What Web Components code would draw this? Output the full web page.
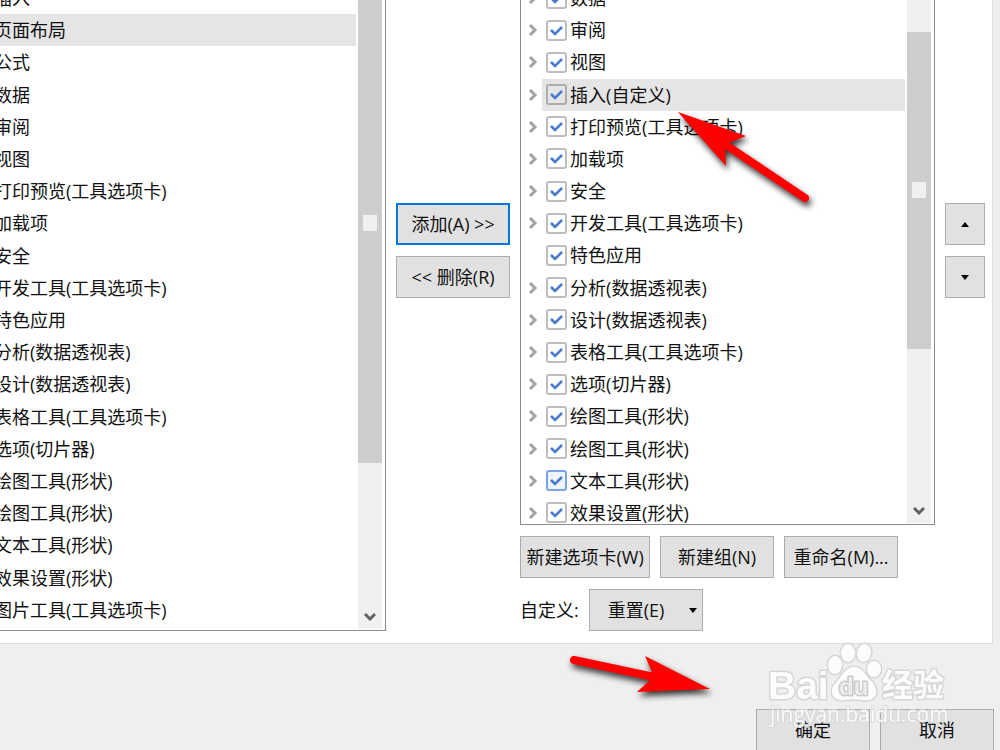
<!DOCTYPE html>
<html lang="zh-CN">
<head>
<meta charset="utf-8">
<title>选项</title>
<style>
  * {
    box-sizing: border-box;
  }
  html {
    height: 100%;
    overflow: hidden;
  }
  body {
    margin: 0;
    height: 100%;
    overflow: hidden;
    position: relative;
    background: #efefef;
    color: #111;
    font-family: "Open Sans", "Noto Sans CJK SC", sans-serif;
    font-size: 18px;
    line-height: 24px;
  }
</style>
</head>
<body>
<ribbon-options></ribbon-options>
<red-arrow kind="up"></red-arrow>
<red-arrow kind="right"></red-arrow>
<site-mark></site-mark>

<script>
class PushButton extends HTMLElement {
  constructor() {
    super();
    this._shadowRoot = this.attachShadow({ mode: "open" });
  }

  connectedCallback() {
    this._shadowRoot.innerHTML = `
    <style>
    :host {
      display: block;
      width: 114px;
      height: 42px;
      flex: none;
    }
    :host([wide]) {
      width: 130px;
    }
    :host([square]) {
      width: 40px;
    }
    button {
      box-sizing: border-box;
      display: flex;
      align-items: center;
      justify-content: center;
      width: 100%;
      height: 100%;
      padding: 0;
      border: 1px solid #adadad;
      border-radius: 0;
      background: #e1e1e1;
      color: inherit;
      font: inherit;
      white-space: nowrap;
    }
    :host([primary]) button {
      border: 2px solid #0078d7;
    }
    :host([menu]) button {
      justify-content: space-between;
      padding: 0 5px 0 18px;
    }
    </style>
    <button type="button" aria-label="${this.getAttribute("label") || this.textContent.trim()}"><slot></slot></button>`;
  }
}

class ScrollBar extends HTMLElement {
  constructor() {
    super();
    this._shadowRoot = this.attachShadow({ mode: "open" });
  }

  connectedCallback() {
    this.before = this.getAttribute("before") || 0;
    this.thumb = this.getAttribute("thumb") || 1;
    this.after = this.getAttribute("after") || 1;
    this._shadowRoot.innerHTML = `
    <style>
    :host {
      display: flex;
      flex-direction: column;
      width: 24px;
      flex: none;
      background: #f0f0f0;
    }
    .before {
      flex: ${this.before} 0 0;
    }
    .thumb {
      flex: ${this.thumb} 0 0;
      display: grid;
      place-items: center;
      background: #cdcdcd;
    }
    .thumb span {
      width: 14px;
      height: 16px;
      background: #f0f0f0;
    }
    .after {
      flex: ${this.after} 0 0;
    }
    .down {
      height: 24px;
      display: grid;
      place-items: center;
    }
    </style>
    <div class="before"></div>
    <div class="thumb"><span></span></div>
    <div class="after"></div>
    <div class="down">
      <svg width="12" height="10" viewBox="0 0 12 10"><path d="M1 2l5 5 5-5" fill="none" stroke="#606060" stroke-width="3"/></svg>
    </div>`;
  }
}

class ListFrame extends HTMLElement {
  constructor() {
    super();
    this._shadowRoot = this.attachShadow({ mode: "open" });
  }

  connectedCallback() {
    this._shadowRoot.innerHTML = `
    <style>
    :host {
      box-sizing: border-box;
      display: flex;
      min-width: 0;
      min-height: 0;
      padding: 0 3px 1px 0;
      overflow: hidden;
      border: 1px solid #888b93;
      background: #fff;
    }
    .rows {
      flex: 1;
      min-width: 0;
      display: grid;
      grid-auto-rows: 1fr;
      margin: 0 2px var(--rows-end, 3px) 0;
    }
    </style>
    <div class="rows" role="list"><slot></slot></div>
    <slot name="bar"></slot>`;
  }
}

class PlainRow extends HTMLElement {
  constructor() {
    super();
    this._shadowRoot = this.attachShadow({ mode: "open" });
  }

  connectedCallback() {
    this.setAttribute("role", "listitem");
    this._shadowRoot.innerHTML = `
    <style>
    :host {
      display: flex;
      align-items: center;
      min-height: 0;
      white-space: nowrap;
    }
    :host([selected]) {
      background: #e5e5e5;
    }
    </style>
    <slot></slot>`;
  }
}

class CheckRow extends HTMLElement {
  constructor() {
    super();
    this._shadowRoot = this.attachShadow({ mode: "open" });
  }

  connectedCallback() {
    this.setAttribute("role", "listitem");
    this._shadowRoot.innerHTML = `
    <style>
    :host {
      display: flex;
      min-height: 0;
      white-space: nowrap;
    }
    .expand {
      width: 21px;
      flex: none;
      display: grid;
      place-items: center;
      padding: 0 0 0 2px;
      border: 0;
      background: none;
    }
    :host([leaf]) .expand {
      visibility: hidden;
    }
    label {
      flex: 1;
      display: flex;
      align-items: center;
      gap: 3px;
      padding-left: 4px;
    }
    :host([selected]) label {
      background: #e5e5e5;
    }
    .box {
      display: grid;
      place-items: center;
    }
    .box > * {
      grid-area: 1 / 1;
    }
    input {
      appearance: none;
      box-sizing: border-box;
      width: 21px;
      height: 21px;
      margin: 0;
      border: 2px solid #bdbdbd;
      border-radius: 3px;
      background: #fff;
    }
    :host([selected]) input {
      border-color: #adadad;
      background: #e5e5e5;
    }
    :host([hot]) input {
      border-color: #7ba3e8;
      background: #eef4fd;
    }
    svg {
      pointer-events: none;
    }
    </style>
    <button class="expand" type="button" aria-label="展开">
      <svg width="10" height="14" viewBox="0 0 10 14"><path d="M2 2l5 5-5 5" fill="none" stroke="#a3a3a3" stroke-width="3"/></svg>
    </button>
    <label>
      <span class="box">
        <input type="checkbox" checked>
        <svg width="13" height="11" viewBox="0 0 13 11"><path d="M1 5l4 4 7-7" fill="none" stroke="#4a7bcb" stroke-width="2.6"/></svg>
      </span>
      <slot></slot>
    </label>`;
  }
}

class RibbonOptions extends HTMLElement {
  constructor() {
    super();
    this._shadowRoot = this.attachShadow({ mode: "open" });
    this.commands = ["插入", "页面布局", "公式", "数据", "审阅", "视图",
      "打印预览(工具选项卡)", "加载项", "安全", "开发工具(工具选项卡)", "特色应用",
      "分析(数据透视表)", "设计(数据透视表)", "表格工具(工具选项卡)", "选项(切片器)",
      "绘图工具(形状)", "绘图工具(形状)", "文本工具(形状)", "效果设置(形状)",
      "图片工具(工具选项卡)"];
    this.tabs = ["数据", "审阅", "视图", "插入(自定义)",
      "打印预览(工具选项卡)", "加载项", "安全", "开发工具(工具选项卡)", "特色应用",
      "分析(数据透视表)", "设计(数据透视表)", "表格工具(工具选项卡)", "选项(切片器)",
      "绘图工具(形状)", "绘图工具(形状)", "文本工具(形状)", "效果设置(形状)"];
  }

  connectedCallback() {
    this.render();
  }

  tabState(name) {
    if (name === "插入(自定义)") return "selected";
    if (name === "特色应用") return "leaf";
    if (name === "文本工具(形状)") return "hot";
    return "";
  }

  render() {
    this._shadowRoot.innerHTML = `
    <style>
    /* scrolled a little: the top and left edges lie outside the window */
    :host {
      display: flex;
      flex-direction: column;
      height: calc(100vh + 21px);
      margin-top: -20px;
    }
    main {
      flex: 1;
      min-height: 0;
      display: grid;
      grid-template-columns: minmax(0, 18fr) 114px minmax(0, 19fr) 40px;
      gap: 10px;
      margin: 0 7px 0 -8px;
      padding: 0 7px 12px 0;
      border: 1px solid #dcdcdc;
      background: #fff;
    }
    .side {
      display: flex;
      flex-direction: column;
      gap: 11px;
      padding-top: 222px;
    }
    .tabs {
      display: flex;
      flex-direction: column;
      gap: 11px;
      min-height: 0;
    }
    .tabs list-frame {
      --rows-end: -6px;
      flex: 1;
    }
    .line {
      display: flex;
      align-items: center;
      gap: 10px;
    }
    footer {
      display: flex;
      justify-content: flex-end;
      gap: 10px;
      padding: 65px 6px 0 0;
    }
    </style>
    <main>
      <list-frame>
        ${this.commands.map((name) => `<plain-row ${name === "页面布局" ? "selected" : ""}>${name}</plain-row>`).join("")}
        <scroll-bar slot="bar" thumb="482" after="142"></scroll-bar>
      </list-frame>
      <div class="side">
        <push-button primary>添加(A) &gt;&gt;</push-button>
        <push-button>&lt;&lt; 删除(R)</push-button>
      </div>
      <div class="tabs">
        <list-frame>
          ${this.tabs.map((name) => `<check-row ${this.tabState(name)}>${name}</check-row>`).join("")}
          <scroll-bar slot="bar" before="50" thumb="318" after="151"></scroll-bar>
        </list-frame>
        <div class="line">
          <push-button wide>新建选项卡(W)</push-button>
          <push-button>新建组(N)</push-button>
          <push-button>重命名(M)...</push-button>
        </div>
        <div class="line">
          <span>自定义:</span>
          <push-button menu>重置(E)
            <svg width="8" height="5" viewBox="0 0 8 5"><path d="M0 0h8L4 5z"/></svg>
          </push-button>
        </div>
      </div>
      <div class="side">
        <push-button square label="上移"><svg width="8" height="5" viewBox="0 0 8 5"><path d="M0 5h8L4 0z"/></svg></push-button>
        <push-button square label="下移"><svg width="8" height="5" viewBox="0 0 8 5"><path d="M0 0h8L4 5z"/></svg></push-button>
      </div>
    </main>
    <footer>
      <push-button>确定</push-button>
      <push-button>取消</push-button>
    </footer>`;
  }
}

class RedArrow extends HTMLElement {
  constructor() {
    super();
    this._shadowRoot = this.attachShadow({ mode: "open" });
  }

  connectedCallback() {
    const up = this.getAttribute("kind") === "up";
    this._shadowRoot.innerHTML = `
    <style>
    :host {
      position: absolute;
      left: ${up ? 670 : 560}px;
      top: ${up ? 104 : 640}px;
      pointer-events: none;
    }
    svg {
      display: block;
      overflow: visible;
      fill: #f00;
      filter: drop-shadow(2px 4px 3px rgba(0, 0, 0, 0.8));
    }
    path + path {
      stroke: #f00;
      stroke-width: 8;
      stroke-linecap: round;
    }
    </style>
    ${up
      ? `<svg width="150" height="110"><path d="M8 8L76 32L59 39L55 45L56 62Z"/><path d="M56 41L135 94"/></svg>`
      : `<svg width="160" height="70"><path d="M150 49L85 16L92 32L89 41L77 52Z"/><path d="M14 20L94 37"/></svg>`}`;
  }
}

class SiteMark extends HTMLElement {
  constructor() {
    super();
    this._shadowRoot = this.attachShadow({ mode: "open" });
  }

  connectedCallback() {
    this._shadowRoot.innerHTML = `
    <style>
    :host {
      position: absolute;
      right: 48px;
      bottom: 16px;
      pointer-events: none;
    }
    svg {
      display: block;
      opacity: 0.85;
      fill: #fff;
      stroke: #d2d2d2;
      stroke-width: 3;
      paint-order: stroke;
      stroke-linejoin: round;
    }
    .name {
      font: bold 39px "Liberation Sans", sans-serif;
    }
    .inner {
      font: bold 24px "Liberation Sans", sans-serif;
      fill: #ececec;
      stroke: #c4c4c4;
    }
    .han {
      font: bold 31px "Noto Sans CJK SC", sans-serif;
    }
    .url {
      font: 21px "Open Sans", sans-serif;
      stroke: #d6d6d6;
      stroke-width: 2;
    }
    </style>
    <svg width="184" height="92" viewBox="0 0 184 92">
      <text class="name" x="0" y="57">Bai</text>
      <ellipse cx="67" cy="23" rx="7" ry="9"/>
      <ellipse cx="80" cy="11" rx="7" ry="9"/>
      <ellipse cx="96" cy="11" rx="7" ry="9" transform="rotate(12 96 11)"/>
      <ellipse cx="106" cy="27" rx="7" ry="8"/>
      <path d="M86 25c8 0 11 7 16 13 6 5 7 10 6 14-2 6-8 7-13 6-6-1-12-1-18 0-6 1-12-1-13-7-1-6 3-9 6-13 5-6 8-13 16-13z"/>
      <text class="inner" x="71" y="53">du</text>
      <text class="han" x="114" y="54">经验</text>
      <text class="url" x="2" y="80">jingyan.baidu.com</text>
    </svg>`;
  }
}

customElements.define("push-button", PushButton);
customElements.define("scroll-bar", ScrollBar);
customElements.define("list-frame", ListFrame);
customElements.define("plain-row", PlainRow);
customElements.define("check-row", CheckRow);
customElements.define("ribbon-options", RibbonOptions);
customElements.define("red-arrow", RedArrow);
customElements.define("site-mark", SiteMark);
</script>
</body>
</html>
